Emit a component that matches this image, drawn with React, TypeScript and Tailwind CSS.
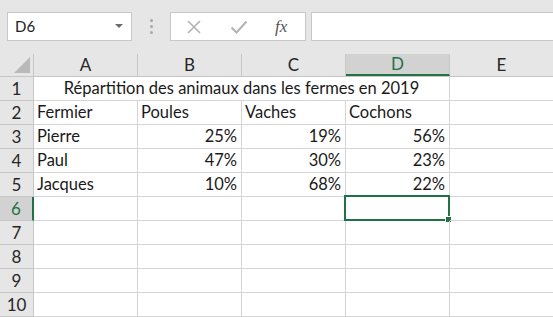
import React from "react";

const cols = ["A", "B", "C", "D", "E"];
const widths = ["w-[104px]", "w-[104px]", "w-[104px]", "w-[104px]", "flex-1"];

type Cell = { t?: string; right?: boolean };

const data: Cell[][] = [
  [],
  [{ t: "Fermier" }, { t: "Poules" }, { t: "Vaches" }, { t: "Cochons" }],
  [{ t: "Pierre" }, { t: "25%", right: true }, { t: "19%", right: true }, { t: "56%", right: true }],
  [{ t: "Paul" }, { t: "47%", right: true }, { t: "30%", right: true }, { t: "23%", right: true }],
  [{ t: "Jacques" }, { t: "10%", right: true }, { t: "68%", right: true }, { t: "22%", right: true }],
  [],
  [],
  [],
  [],
  [],
];

const font = { fontFamily: "Lato, 'Open Sans', sans-serif" };

export default function App() {
  return (
    <div className="w-[553px] h-[317px] overflow-hidden bg-white text-[#1a1a1a]" style={font}>
      {/* Top formula bar */}
      <div className="h-[54px] bg-[#e6e6e6] flex items-start pt-[12px]">
        <div className="ml-[7px] w-[125px] h-[29px] bg-white border border-[#c8c8c8] flex items-center pl-[7px] pr-[8px] text-[15px] text-[#222]">
          <span className="flex-1">D6</span>
          <svg width="8" height="5" viewBox="0 0 8 5">
            <path d="M0 0 L8 0 L4 4 Z" fill="#6b6b6b" />
          </svg>
        </div>
        <div className="w-[38px] h-[29px] flex flex-col items-center justify-center gap-[3px]">
          <div className="w-[3px] h-[3px] bg-[#a8a8a8] rounded-full" />
          <div className="w-[3px] h-[3px] bg-[#a8a8a8] rounded-full" />
          <div className="w-[3px] h-[3px] bg-[#a8a8a8] rounded-full" />
        </div>
        <div className="w-[136px] h-[29px] bg-white border border-[#c8c8c8] flex items-center">
          <svg className="ml-[15px]" width="16" height="16" viewBox="0 0 16 16">
            <path d="M2 2 L14 14 M14 2 L2 14" stroke="#b3b3b3" strokeWidth="1.6" fill="none" />
          </svg>
          <svg className="ml-[28px]" width="18" height="16" viewBox="0 0 18 16">
            <path d="M1.5 8.5 L6.5 13.5 L16.5 2.5" stroke="#b3b3b3" strokeWidth="2" fill="none" />
          </svg>
          <span
            className="ml-[27px] text-[17px] italic text-[#555] leading-none"
            style={{ fontFamily: "'Liberation Serif', serif" }}
          >
            fx
          </span>
        </div>
        <div className="ml-[5px] flex-1 h-[29px] bg-white border border-[#c8c8c8] border-r-0" />
      </div>

      {/* Column header row */}
      <div className="flex h-[23px] bg-[#e6e6e6] border-b border-[#c6c6c6] text-[17px] text-[#262626]">
        <div className="w-[34px] h-full border-r border-[#c6c6c6] flex items-end justify-end pr-[3px] pb-[3px]">
          <svg width="16" height="16" viewBox="0 0 16 16">
            <path d="M16 0 L16 16 L0 16 Z" fill="#b9b9b9" />
          </svg>
        </div>
        {cols.map((c, i) => (
          <div
            key={c}
            className={`${widths[i]} h-full flex items-center justify-center ${
              c === "D"
                ? "bg-[#d2d2d2] text-[#217346] border-b-2 border-[#217346] mb-[-1px] border-r border-r-[#c6c6c6]"
                : i < 4
                ? "border-r border-[#c6c6c6]"
                : ""
            }`}
          >
            {c}
          </div>
        ))}
      </div>

      {/* Rows */}
      {data.map((row, r) => {
        const rowNum = r + 1;
        const selected = rowNum === 6;
        return (
          <div key={r} className="flex h-[24px] text-[16.5px]">
            <div
              className={`w-[34px] h-full border-b flex items-center justify-center text-[17px] ${
                selected
                  ? "bg-[#d2d2d2] text-[#217346] border-r-2 border-r-[#217346] border-b-[#c6c6c6]"
                  : "bg-[#e6e6e6] text-[#262626] border-r border-[#c6c6c6]"
              }`}
            >
              {rowNum}
            </div>
            {rowNum === 1 ? (
              <>
                <div className="w-[416px] h-full border-r border-b border-[#d4d4d4] flex items-center justify-center">
                  Répartition des animaux dans les fermes en 2019
                </div>
                <div className="flex-1 h-full border-b border-[#d4d4d4]" />
              </>
            ) : (
              cols.map((c, i) => {
                const cell = row[i];
                const isSel = selected && c === "D";
                return (
                  <div
                    key={c}
                    className={`${widths[i]} h-full relative border-b ${
                      i < 4 ? "border-r" : ""
                    } border-[#d4d4d4] flex items-center ${
                      cell?.right ? "justify-end pr-[4px]" : "pl-[3px]"
                    }`}
                  >
                    {cell?.t}
                    {isSel && (
                      <div className="absolute left-[-2px] top-[-2px] right-[-1px] bottom-[-1px] border-2 border-[#217346]">
                        <div className="absolute right-[-4px] bottom-[-4px] w-[5px] h-[5px] bg-[#217346] border border-white box-content" />
                      </div>
                    )}
                  </div>
                );
              })
            )}
          </div>
        );
      })}
    </div>
  );
}
